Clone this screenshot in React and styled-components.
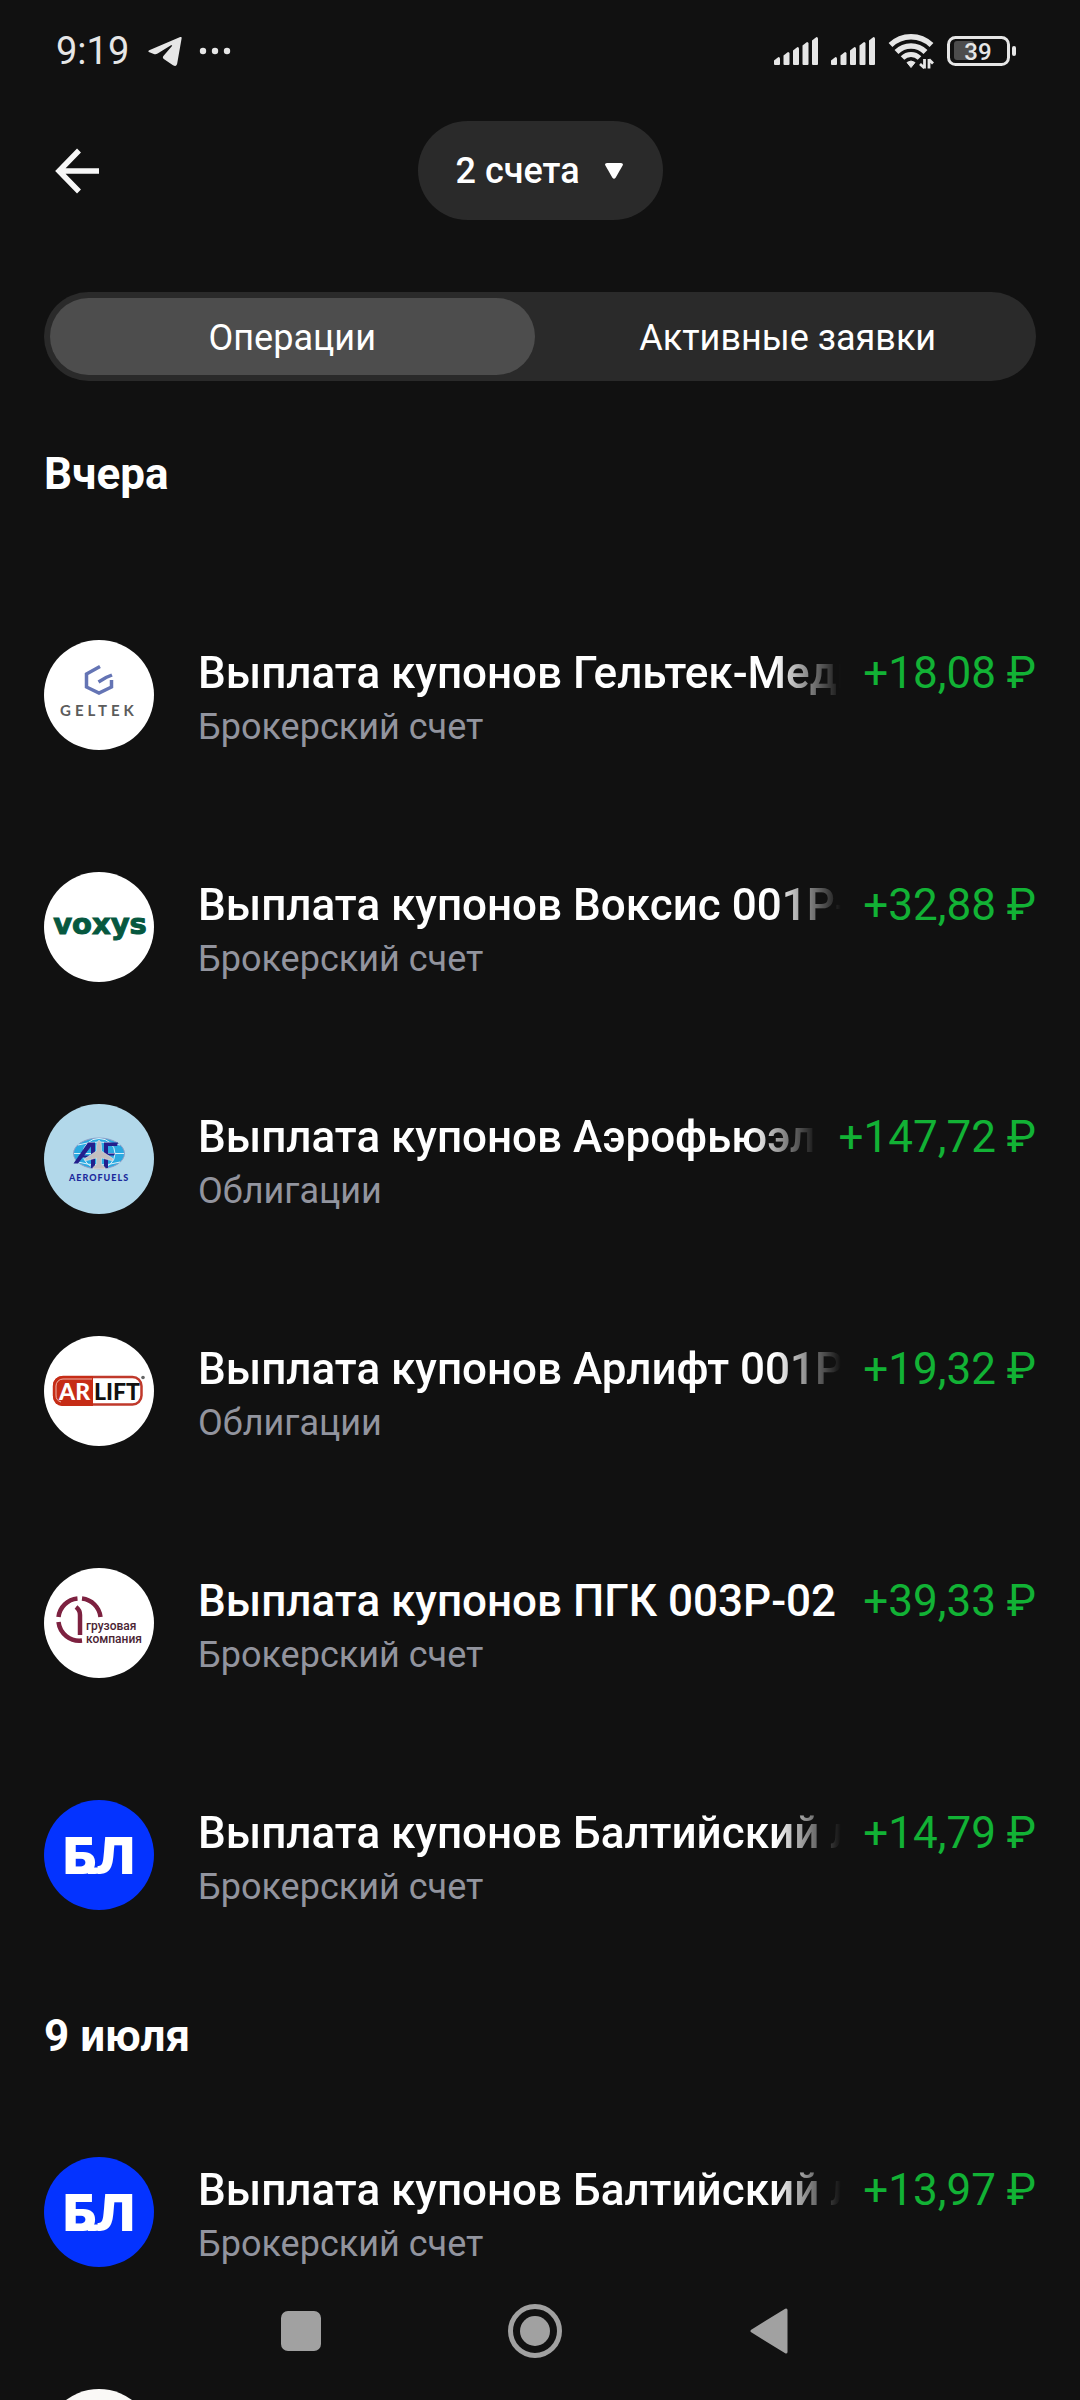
import React, { useLayoutEffect, useRef, useState } from 'react';
import styled, { createGlobalStyle } from 'styled-components';

const GlobalStyle = createGlobalStyle`
  *, *::before, *::after { box-sizing: border-box; }
  body {
    margin: 0;
    background: #111111;
    color: #ffffff;
    font-family: Roboto, "Noto Sans", sans-serif;
  }
  button, select { font: inherit; color: inherit; }
`;

const Screen = styled.div`
  display: flex;
  flex-direction: column;
  height: 100vh;
  overflow: hidden;
`;

const StatusBar = styled.header`
  flex: none;
  display: flex;
  justify-content: space-between;
  align-items: center;
  height: 100px;
  padding: 2px 63px 0 56px;
  color: #e6e6e6;
`;

const StatusGroup = styled.div`
  display: flex;
  align-items: center;
  gap: ${(p) => p.$gap}px;
`;

const Clock = styled.time`
  font-size: 38px;
  line-height: 44px;
`;

const TopBar = styled.div`
  flex: none;
  display: grid;
  grid-template-columns: 1fr auto 1fr;
  align-items: center;
  padding: 21px 44px 0;
`;

const BackButton = styled.button`
  justify-self: start;
  display: flex;
  padding: 0 11px;
  border: 0;
  background: none;
`;

const AccountPicker = styled.label`
  position: relative;
  display: flex;
  align-items: center;
`;

const AccountSelect = styled.select`
  appearance: none;
  height: 99px;
  padding: 0 82px 0 38px;
  border: 0;
  border-radius: 50px;
  background: #2a2a2a;
  font-size: 36px;
  font-weight: 500;
`;

const Caret = styled.svg`
  position: absolute;
  right: 40px;
  pointer-events: none;
`;

const Tabs = styled.div`
  flex: none;
  display: grid;
  grid-template-columns: 1fr 1fr;
  gap: 11px;
  height: 89px;
  margin: 72px 44px 0;
  padding: 6px;
  border-radius: 45px;
  background: #2a2a2a;
`;

const Tab = styled.button`
  padding: 3px 0 0;
  border: 0;
  border-radius: 39px;
  background: ${(p) => (p.$active ? '#4d4d4d' : 'transparent')};
  font-size: 36px;
  line-height: 42px;
`;

const Feed = styled.main`
  flex: 1;
  min-height: 0;
  padding: 28px 44px 138px;
  overflow-y: auto;
  scrollbar-width: none;
`;

const DayHeading = styled.h2`
  margin: 0;
  padding: 39px 0 34px;
  font-size: 44px;
  line-height: 52px;
  font-weight: 700;
`;

const Operations = styled.ul`
  margin: 0;
  padding: ${(p) => (p.$spaced ? '45px' : '0')} 0 0;
  list-style: none;
`;

const Operation = styled.li`
  display: flex;
  align-items: flex-start;
  gap: 44px;
  padding: 61px 0;
`;

const Avatar = styled.div`
  flex: none;
  width: 110px;
  height: 110px;
  border-radius: 50%;
  overflow: hidden;
  background: ${(p) => p.$color};

  svg { display: block; }
`;

const Details = styled.div`
  flex: 1;
  min-width: 0;
  display: grid;
  grid-template-columns: minmax(0, 1fr) auto;
  column-gap: 22px;
  row-gap: 7px;
  padding-top: 7px;
`;

const Title = styled.div`
  overflow: hidden;
  white-space: nowrap;
  font-size: 44px;
  line-height: 52px;
  font-weight: 500;
  mask-image: ${(p) =>
    p.$faded ? 'linear-gradient(to left, transparent, #000 66px)' : 'none'};
`;

const Amount = styled.div`
  color: #12b235;
  font-size: 44px;
  line-height: 52px;
  white-space: nowrap;
`;

const Account = styled.div`
  grid-column: 1 / -1;
  color: #92949e;
  font-size: 36px;
  line-height: 42px;
`;

const NavBar = styled.nav`
  position: fixed;
  left: 0;
  right: 0;
  bottom: 0;
  display: flex;
  justify-content: center;
  align-items: center;
  gap: 124px;
  height: 138px;
  padding-right: 10px;
`;

const NavButton = styled.button`
  display: flex;
  justify-content: center;
  align-items: center;
  width: 110px;
  height: 110px;
  padding: 0;
  border: 0;
  background: none;
  color: #a1a1a1;
`;

function TelegramIcon() {
  return (
    <svg width="34" height="31" viewBox="0 0 34 31" fill="currentColor" aria-hidden="true">
      <path d="M32.2 1.1 1.2 14.2c-1.2.6-1 1.6.2 2.1l4.4 1.6c1.3.5 2.6.4 3.8-.4L23 9.3c.9-.5 1.5.2.8.9L15.4 20c-.8 1-.7 2.2.4 3l9.2 6.2c2.2 1.4 3.6 1 4.2-1.6L33.600 2.400c.2-1.200-.4-1.700-1.400-1.300z" />
    </svg>
  );
}

function MoreIcon() {
  return (
    <svg width="32" height="8" viewBox="0 0 32 8" fill="currentColor" aria-hidden="true">
      <circle cx="4" cy="4" r="3.200" />
      <circle cx="16" cy="4" r="3.200" />
      <circle cx="28" cy="4" r="3.200" />
    </svg>
  );
}

function SignalIcon() {
  const tops = [21, 16, 11, 6, 1];
  return (
    <svg width="44" height="30" viewBox="0 0 44 30" fill="currentColor" aria-hidden="true">
      {tops.map((y, i) => {
        const x = i * 9.5;
        return (
          <path
            key={y}
            d={`M${x} ${y + 3.5}L${x + 4.5} ${y}Q${x + 6} ${y} ${x + 6} ${y + 1.5}V28Q${x + 6} 29 ${x + 5} 29H${x + 1}Q${x} 29 ${x} 28Z`}
          />
        );
      })}
    </svg>
  );
}

function WifiIcon() {
  return (
    <svg width="46" height="36" viewBox="0 0 46 36" fill="none" stroke="currentColor" aria-hidden="true">
      <path d="M2.500 12a29.500 29.500 0 0 1 41 0" strokeWidth="5.500" />
      <path d="M8.500 19a20.500 20.500 0 0 1 29 0" strokeWidth="5.500" />
      <path d="M14.500 25a12 12 0 0 1 17 0" strokeWidth="5" />
      <path d="M19 29.500q4-3 8 0l-4 5z" fill="currentColor" strokeWidth="1" strokeLinejoin="round" />
      <path d="M36.500 26v9.500M41 35.500V26M36.500 35l-4.500-4M41 26.500l4 4" strokeWidth="2.800" />
    </svg>
  );
}

function BatteryIcon() {
  return (
    <svg width="70" height="32" viewBox="0 0 70 32" aria-label="39%">
      <rect x="7" y="6" width="20" height="19" rx="3" fill="#4d4d4d" />
      <rect x="1.500" y="2.500" width="60" height="27" rx="7" fill="none" stroke="currentColor" strokeWidth="3" />
      <rect x="65" y="11" width="4" height="10" rx="2" fill="currentColor" />
      <text x="31" y="24.500" textAnchor="middle" fontSize="24" fontWeight="500" fill="currentColor">39</text>
    </svg>
  );
}

function BackIcon() {
  return (
    <svg width="44" height="46" viewBox="0 0 44 46" fill="none" stroke="#f7f7f7" strokeWidth="5.500" aria-hidden="true">
      <path d="M24 2.500 4 23l20 20.500M4 23h40" />
    </svg>
  );
}

function GeltekLogo() {
  return (
    <svg width="110" height="110" viewBox="0 0 110 110" role="img">
      <path
        d="M56 26.500 42.500 34v13L55 53l12.500-6V40M54.500 42l7.500-4.500 6-2.500"
        fill="none"
        stroke="#6474b4"
        strokeWidth="3.500"
      />
      <text x="16" y="76" fontFamily="Lato, sans-serif" fontWeight="700" fontSize="15" letterSpacing="4" fill="#5c5c5c">
        GELTEK
      </text>
    </svg>
  );
}

function VoxysLogo() {
  return (
    <svg width="110" height="110" viewBox="0 0 110 110" role="img">
      <text
        x="56"
        y="62"
        textAnchor="middle"
        fontFamily="DejaVu Sans, sans-serif"
        fontWeight="700"
        fontSize="29"
        fill="#06583f"
        stroke="#06583f"
        strokeWidth="1"
      >
        voxys
      </text>
    </svg>
  );
}

function AerofuelsLogo() {
  return (
    <svg width="110" height="110" viewBox="0 0 110 110" role="img">
      <ellipse cx="55" cy="49.500" rx="25.500" ry="15.500" fill="#2aa9e0" stroke="#8f9fc8" />
      <g fill="none" stroke="#d7f0fb" strokeWidth="1">
        <ellipse cx="55" cy="49.500" rx="16" ry="15" />
        <path d="M30 49.500h50M34 41q21-6 42 0M34 58q21 6 42 0" />
      </g>
      <path d="M29.500 59.500 44 38.500h7V64h-4V42.500L34 59.500zM38 51.500h10v2H37z" fill="#241f8c" />
      <path d="M60 64V38.500h14l-1 3.500h-9v22zM64 49.500h7l-1 2h-6z" fill="#241f8c" />
      <path
        d="M55 36q2.500 2 2.500 6v5L69 54.500V57l-11.500-3v6l3.500 3.500V65H49v-1.500l3.500-3.500v-6L41 57v-2.500L52.500 47v-5q0-4 2.500-6z"
        fill="#c3bfc0"
        stroke="#e4eef4"
        strokeWidth=".5"
      />
      <text x="25" y="76.500" fontFamily="Lato, sans-serif" fontWeight="900" fontSize="9" letterSpacing="1" fill="#1c2a9c">
        AEROFUELS
      </text>
    </svg>
  );
}

function ArliftLogo() {
  return (
    <svg width="110" height="110" viewBox="0 0 110 110" role="img">
      <rect x="10" y="41" width="87.500" height="27.500" rx="9" fill="#ffffff" stroke="#c0392b" strokeWidth="2.500" />
      <path d="M49 40H18a9 9 0 0 0-9 9v12a9 9 0 0 0 9 9H49z" fill="#c62c16" />
      <path d="M48 43H19a7 7 0 0 0-7 7v9a7 7 0 0 0 5 7" fill="none" stroke="#eeb4a8" strokeWidth="1" />
      <circle cx="99" cy="41.500" r="1.800" fill="#666666" />
      <g fontFamily="Lato, sans-serif" fontWeight="900" fontSize="23">
        <text x="15" y="63.500" fill="#ffffff">AR</text>
        <text x="50" y="63.500" fill="#111111">LIFT</text>
      </g>
    </svg>
  );
}

function PgkLogo() {
  return (
    <svg width="110" height="110" viewBox="0 0 110 110" role="img">
      <g fill="none" stroke="#7d2140" strokeWidth="4.500">
        <path d="M14.500 49A21 21 0 0 1 33.500 30.500" />
        <path d="M38 30.500A21 21 0 0 1 56.500 49" />
        <path d="M14.500 54A21 21 0 0 0 38 72.500" />
        <path d="M32 39q4 3 4 8V67" />
      </g>
      <g fontWeight="500" fontSize="12" fill="#4a2433">
        <text x="42" y="62">грузовая</text>
        <text x="42" y="75">компания</text>
      </g>
    </svg>
  );
}

function BalticLogo() {
  return (
    <svg width="110" height="110" viewBox="0 0 110 110" role="img">
      <text x="55" y="73.500" textAnchor="middle" fontFamily="Inter, sans-serif" fontWeight="900" fontSize="51" fill="#ffffff">
        БЛ
      </text>
      <path d="M44 67.500h14v3q-3 3.500-7 3.500h-7z" fill="#ffffff" />
    </svg>
  );
}

const LOGOS = {
  geltek: { color: '#ffffff', Logo: GeltekLogo },
  voxys: { color: '#ffffff', Logo: VoxysLogo },
  aerofuels: { color: '#b2d8ea', Logo: AerofuelsLogo },
  arlift: { color: '#ffffff', Logo: ArliftLogo },
  pgk: { color: '#ffffff', Logo: PgkLogo },
  baltic: { color: '#0433ff', Logo: BalticLogo },
};

const DAYS = [
  {
    day: 'Вчера',
    spaced: true,
    items: [
      { logo: 'geltek', title: 'Выплата купонов Гельтек-Меди', account: 'Брокерский счет', amount: '+18,08' },
      { logo: 'voxys', title: 'Выплата купонов Воксис 001P-', account: 'Брокерский счет', amount: '+32,88' },
      { logo: 'aerofuels', title: 'Выплата купонов Аэрофьюэлз', account: 'Облигации', amount: '+147,72' },
      { logo: 'arlift', title: 'Выплата купонов Арлифт 001P-', account: 'Облигации', amount: '+19,32' },
      { logo: 'pgk', title: 'Выплата купонов ПГК 003P-02', account: 'Брокерский счет', amount: '+39,33' },
      { logo: 'baltic', title: 'Выплата купонов Балтийский ли', account: 'Брокерский счет', amount: '+14,79' },
    ],
  },
  {
    day: '9 июля',
    spaced: false,
    items: [
      { logo: 'baltic', title: 'Выплата купонов Балтийский ли', account: 'Брокерский счет', amount: '+13,97' },
    ],
    loading: true,
  },
];

/* A one-line title whose end dissolves when it does not fit. */
function FadingTitle({ children }) {
  const ref = useRef(null);
  const [faded, setFaded] = useState(false);

  useLayoutEffect(() => {
    const measure = () => {
      const el = ref.current;
      if (el) setFaded(el.scrollWidth > el.clientWidth);
    };
    measure();
    window.addEventListener('resize', measure);
    return () => window.removeEventListener('resize', measure);
  }, [children]);

  return (
    <Title ref={ref} $faded={faded}>
      {children}
    </Title>
  );
}

function OperationRow({ logo, title, account, amount }) {
  const { color, Logo } = LOGOS[logo];
  return (
    <Operation>
      <Avatar $color={color}>
        <Logo />
      </Avatar>
      <Details>
        <FadingTitle>{title}</FadingTitle>
        <Amount>{amount}&nbsp;₽</Amount>
        <Account>{account}</Account>
      </Details>
    </Operation>
  );
}

export default function App() {
  const [tab, setTab] = useState('operations');

  return (
    <Screen>
      <GlobalStyle />
      <StatusBar>
        <StatusGroup $gap={19}>
          <Clock>9:19</Clock>
          <StatusGroup $gap={17}>
            <TelegramIcon />
            <MoreIcon />
          </StatusGroup>
        </StatusGroup>
        <StatusGroup $gap={13}>
          <SignalIcon />
          <SignalIcon />
          <WifiIcon />
          <BatteryIcon />
        </StatusGroup>
      </StatusBar>

      <TopBar>
        <BackButton type="button" aria-label="Назад">
          <BackIcon />
        </BackButton>
        <AccountPicker>
          <AccountSelect aria-label="Счета" defaultValue="2">
            <option value="2">2 счета</option>
          </AccountSelect>
          <Caret width="18" height="16" viewBox="0 0 18 16" fill="#ffffff" aria-hidden="true">
            <path d="M2 0h14q2.800.3 1.600 2.600L10.600 14.800q-1.600 2-3.200 0L.4 2.600Q-.8.300 2 0z" />
          </Caret>
        </AccountPicker>
      </TopBar>

      <Tabs role="tablist">
        <Tab
          type="button"
          role="tab"
          aria-selected={tab === 'operations'}
          $active={tab === 'operations'}
          onClick={() => setTab('operations')}
        >
          Операции
        </Tab>
        <Tab
          type="button"
          role="tab"
          aria-selected={tab === 'orders'}
          $active={tab === 'orders'}
          onClick={() => setTab('orders')}
        >
          Активные заявки
        </Tab>
      </Tabs>

      <Feed>
        {DAYS.map(({ day, spaced, items, loading }) => (
          <section key={day}>
            <DayHeading>{day}</DayHeading>
            <Operations $spaced={spaced}>
              {items.map((item) => (
                <OperationRow key={item.logo} {...item} />
              ))}
              {loading && (
                <Operation>
                  <Avatar $color="#faf9f7" />
                </Operation>
              )}
            </Operations>
          </section>
        ))}
      </Feed>

      <NavBar>
        <NavButton type="button" aria-label="Недавние приложения">
          <svg width="40" height="40" viewBox="0 0 40 40" aria-hidden="true">
            <rect width="40" height="40" rx="7" fill="currentColor" />
          </svg>
        </NavButton>
        <NavButton type="button" aria-label="Домой">
          <svg width="54" height="54" viewBox="0 0 54 54" aria-hidden="true">
            <circle cx="27" cy="27" r="24.500" fill="none" stroke="currentColor" strokeWidth="5" />
            <circle cx="27" cy="27" r="15" fill="currentColor" />
          </svg>
        </NavButton>
        <NavButton type="button" aria-label="Назад">
          <svg width="38" height="46" viewBox="0 0 38 46" aria-hidden="true">
            <path d="M36 2v42L2 23z" fill="currentColor" stroke="currentColor" strokeWidth="3" strokeLinejoin="round" />
          </svg>
        </NavButton>
      </NavBar>
    </Screen>
  );
}
